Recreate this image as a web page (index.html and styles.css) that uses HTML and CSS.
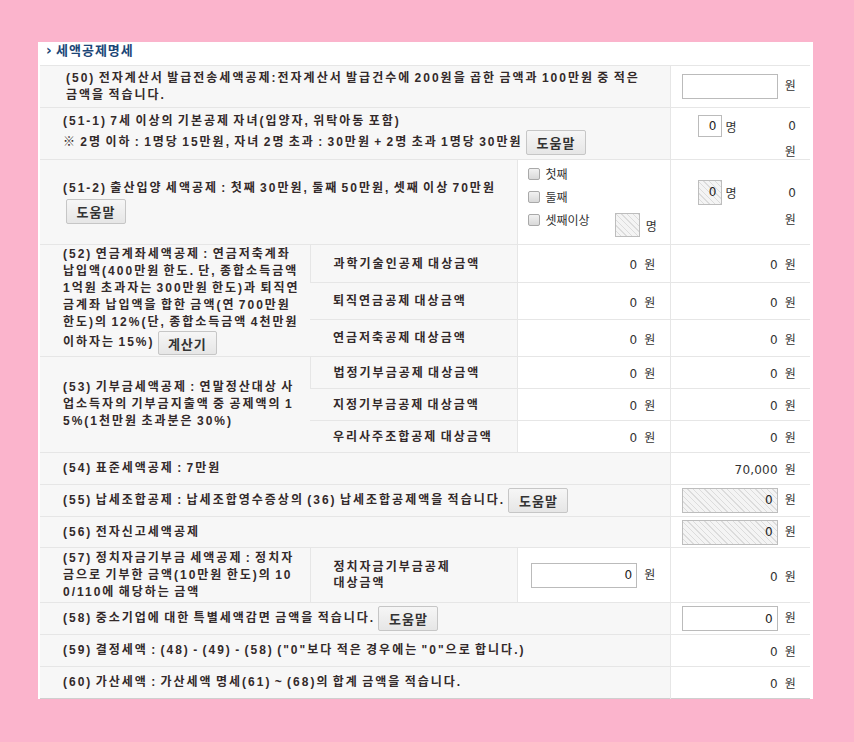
FILE: index.html
```html
<!DOCTYPE html>
<html lang="ko">
<head>
<meta charset="utf-8">
<title>세액공제명세</title>
<link rel="stylesheet" href="styles.css">
</head>
<body>
<div class="panel">
  <h2 class="title"><span class="chev">›</span>세액공제명세</h2>
  <table class="grid">
    <colgroup><col class="ca"><col class="cb"><col class="cc"><col class="cd"></colgroup>
    <tr class="r50">
      <th colspan="3" class="lbl first">(50) 전자계산서 발급전송세액공제:전자계산서 발급건수에 200원을 곱한 금액과 100만원 중 적은<br>금액을 적습니다.</th>
      <td class="val"><input class="inp wide" type="text"> 원</td>
    </tr>
    <tr class="r511">
      <th colspan="3" class="lbl">(51-1) 7세 이상의 기본공제 자녀(입양자, 위탁아동 포함)<br>※ 2명 이하 : 1명당 15만원, 자녀 2명 초과 : 30만원 + 2명 초과 1명당 30만원 <button class="btn">도움말</button></th>
      <td class="val stack">
        <div class="pair"><span class="cnt"><input class="inp tiny" type="text" value="0"> 명</span><span>0</span></div>
        <div class="won2">원</div>
      </td>
    </tr>
    <tr class="r512">
      <th colspan="2" class="lbl">(51-2) 출산입양 세액공제 : 첫째 30만원, 둘째 50만원, 셋째 이상 70만원<br><button class="btn b2">도움말</button></th>
      <td class="chk">
        <div class="ck"><span class="box"></span>첫째</div>
        <div class="ck"><span class="box"></span>둘째</div>
        <div class="ck lastck"><span class="box"></span><span class="cktxt">셋째이상</span><span class="inp hatch sq"></span><span class="myeong">명</span></div>
      </td>
      <td class="val stack s2">
        <div class="pair"><span class="cnt"><span class="inp hatch tiny">0</span> 명</span><span>0</span></div>
        <div class="won2">원</div>
      </td>
    </tr>
    <tr class="r38">
      <th rowspan="3" class="lbl nw">(52) 연금계좌세액공제 : 연금저축계좌<br>납입액(400만원 한도. 단, 종합소득금액<br>1억원 초과자는 300만원 한도)과 퇴직연<br>금계좌 납입액을 합한 금액(연 700만원<br>한도)의 12%(단, 종합소득금액 4천만원<br>이하자는 15%) <button class="btn b3">계산기</button></th>
      <th class="sub">과학기술인공제 대상금액</th>
      <td class="val">0 원</td>
      <td class="val">0 원</td>
    </tr>
    <tr class="r37">
      <th class="sub">퇴직연금공제 대상금액</th>
      <td class="val">0 원</td>
      <td class="val">0 원</td>
    </tr>
    <tr class="r37">
      <th class="sub">연금저축공제 대상금액</th>
      <td class="val">0 원</td>
      <td class="val">0 원</td>
    </tr>
    <tr class="r32">
      <th rowspan="3" class="lbl nw">(53) 기부금세액공제 : 연말정산대상 사<br>업소득자의 기부금지출액 중 공제액의 1<br>5%(1천만원 초과분은 30%)</th>
      <th class="sub">법정기부금공제 대상금액</th>
      <td class="val">0 원</td>
      <td class="val">0 원</td>
    </tr>
    <tr class="r32">
      <th class="sub">지정기부금공제 대상금액</th>
      <td class="val">0 원</td>
      <td class="val">0 원</td>
    </tr>
    <tr class="r32">
      <th class="sub">우리사주조합공제 대상금액</th>
      <td class="val">0 원</td>
      <td class="val">0 원</td>
    </tr>
    <tr class="r32">
      <th colspan="3" class="lbl">(54) 표준세액공제 : 7만원</th>
      <td class="val">70,000 원</td>
    </tr>
    <tr class="r32">
      <th colspan="3" class="lbl">(55) 납세조합공제 : 납세조합영수증상의 (36) 납세조합공제액을 적습니다. <button class="btn">도움말</button></th>
      <td class="val"><span class="inp hatch wide">0</span> 원</td>
    </tr>
    <tr class="r31">
      <th colspan="3" class="lbl">(56) 전자신고세액공제</th>
      <td class="val"><span class="inp hatch wide">0</span> 원</td>
    </tr>
    <tr class="r55">
      <th class="lbl nw">(57) 정치자금기부금 세액공제 : 정치자<br>금으로 기부한 금액(10만원 한도)의 10<br>0/110에 해당하는 금액</th>
      <th class="sub">정치자금기부금공제<br>대상금액</th>
      <td class="val"><input class="inp mid" type="text" value="0"> 원</td>
      <td class="val">0 원</td>
    </tr>
    <tr class="r32">
      <th colspan="3" class="lbl">(58) 중소기업에 대한 특별세액감면 금액을 적습니다. <button class="btn">도움말</button></th>
      <td class="val"><input class="inp wide" type="text" value="0"> 원</td>
    </tr>
    <tr class="r32">
      <th colspan="3" class="lbl">(59) 결정세액 : (48) - (49) - (58) ("0"보다 적은 경우에는 "0"으로 합니다.)</th>
      <td class="val">0 원</td>
    </tr>
    <tr class="r32 last">
      <th colspan="3" class="lbl">(60) 가산세액 : 가산세액 명세(61) ~ (68)의 합계 금액을 적습니다.</th>
      <td class="val">0 원</td>
    </tr>
  </table>
</div>
</body>
</html>
```
FILE: styles.css
```css
html, body {
  margin: 0;
  padding: 0;
}
body {
  background: #fbb4cc;
  font-family: "DejaVu Sans", "Noto Sans CJK KR", sans-serif;
  font-size: 12px;
  color: #333;
  height: 742px;
  overflow: hidden;
}
.panel {
  margin: 42px 0 0 38px;
  width: 775px;
  height: 657px;
  background: #fff;
}
.title {
  margin: 0;
  height: 23px;
  padding-left: 8px;
  font-size: 13px;
  line-height: 15px;
  font-weight: bold;
  color: #1c4677;
  font-family: "Noto Sans CJK KR", sans-serif;
  letter-spacing: 1px;
}
.chev {
  display: inline-block;
  width: 10px;
  font-family: "DejaVu Sans", sans-serif;
  font-size: 14px;
}
.grid {
  margin-left: 2px;
  width: 770px;
  border-collapse: collapse;
  table-layout: fixed;
  border-top: 1px solid #cfcfcf;
  border-bottom: 1px solid #cfcfcf;
}
.ca { width: 270px; }
.cb { width: 207px; }
.cc { width: 153px; }
.cd { width: 140px; }
.grid th, .grid td {
  border-top: 1px solid #e6e6e6;
  border-left: 1px solid #e6e6e6;
  padding: 0;
  vertical-align: middle;
}
.grid tr > :first-child { border-left: 0; }
.lbl, .sub {
  background: #f7f7f7;
  text-align: left;
  font-family: "Liberation Sans", "Noto Sans CJK KR", sans-serif;
  font-weight: bold;
  font-size: 12px;
  color: #332a2a;
  letter-spacing: 2px;
  word-spacing: -2px;
}
.lbl {
  line-height: 17px;
  padding: 0 2px 0 23px !important;
  white-space: nowrap;
}
.lbl.first { padding-left: 26px !important; }
.sub {
  line-height: 16px;
  padding: 0 2px 0 23px !important;
}
.val {
  background: #fff;
  text-align: right;
  padding: 0 14px 0 0 !important;
  white-space: nowrap;
  word-spacing: 3px;
  letter-spacing: 0.2px;
}
.r50 { height: 42px; }
.r511 { height: 51px; }
.r512 { height: 85px; }
.r38 { height: 38px; }
.r37 { height: 37px; }
.r32 { height: 32px; }
.r31 { height: 31px; }
.r55 { height: 55px; }
.btn {
  display: inline-block;
  box-sizing: border-box;
  width: 60px;
  height: 25px;
  padding: 0;
  border: 1px solid #c6c6c6;
  border-radius: 2px;
  background: linear-gradient(#f6f6f6, #e6e6e6);
  font-family: "Noto Sans CJK KR", sans-serif;
  font-size: 13px;
  font-weight: bold;
  letter-spacing: 1px;
  color: #333;
  vertical-align: middle;
  word-spacing: 0;
}
.b2 { margin: 2px 0 0 3px; }
.b3 { width: 59px; height: 24px; }
.inp {
  display: inline-block;
  box-sizing: border-box;
  height: 25px;
  border: 1px solid #bbb;
  background: #fff;
  font-family: "DejaVu Sans", sans-serif;
  font-size: 12px;
  text-align: right;
  padding: 0 4px 0 0;
  line-height: 23px;
  vertical-align: middle;
  color: #222;
  margin: 0;
  letter-spacing: 0;
  word-spacing: 0;
}
.wide { width: 96px; }
.mid { width: 106px; }
.tiny { width: 24px; height: 22px; line-height: 20px; }
.hatch {
  background: repeating-linear-gradient(45deg, #f4f4f4 0 3px, #dcdcdc 3px 4px);
  border-color: #bdbdbd;
}
.s2 .tiny { height: 25px; line-height: 23px; }
.stack { vertical-align: top !important; word-spacing: 0; }
.pair {
  display: flex;
  justify-content: space-between;
  align-items: center;
  padding-left: 27px;
  margin-top: 7px;
}
.s2 .pair { margin-top: 20px; }
.cnt { display: flex; align-items: center; gap: 4px; }
.won2 { margin-top: 5px; }
.chk {
  background: #fff;
  padding: 0 0 0 10px !important;
  vertical-align: top !important;
}
.ck {
  display: flex;
  align-items: center;
  height: 23px;
  font-family: "Noto Sans CJK KR", sans-serif;
}
.ck:first-child { margin-top: 2px; }
.box {
  display: inline-block;
  box-sizing: border-box;
  width: 12px;
  height: 12px;
  border: 1px solid #a9a9a9;
  border-radius: 2px;
  background: linear-gradient(#f2f2f2, #d9d9d9);
  margin-right: 6px;
}
.lastck {
  align-items: flex-start;
  height: 34px;
}
.lastck .box { margin-top: 6px; }
.cktxt { line-height: 23px; }
.sq {
  width: 25px;
  height: 24px;
  margin: 5px 6px 0 25px;
}
.myeong { line-height: 23px; margin-top: 6px; }
```
